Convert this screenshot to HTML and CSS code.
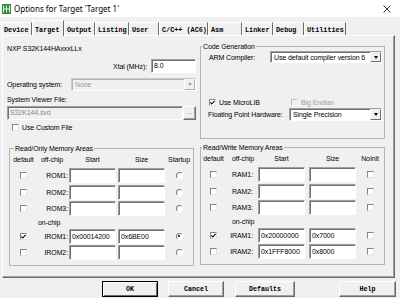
FILE: index.html
```html
<!DOCTYPE html>
<html lang="en">
<head>
  <meta charset="UTF-8">
  <title>Options for Target 'Target 1'</title>
  <link rel="stylesheet" href="styles.css">
</head>
<body>

  <div class="titlebar">
    <svg class="app-icon" width="9" height="10" viewBox="0 0 9 10">
      <rect width="9" height="10" fill="#2a8a3e"/>
      <path d="M1.5 1.5v7M4.5 1.5v7M1.5 5h6M7.5 1.5v7" stroke="#e6f2df" stroke-width="1" fill="none"/>
    </svg>
    <span class="title">Options for Target 'Target 1'</span>
    <svg class="close" width="8" height="8" viewBox="0 0 8 8">
      <path d="M0.5 0.5l7 7M7.5 0.5l-7 7" stroke="#222" stroke-width="0.9"/>
    </svg>
  </div>

  <div class="tabs">
    <span class="tab">Device</span>
    <span class="tab active">Target</span>
    <span class="tab">Output</span>
    <span class="tab">Listing</span>
    <span class="tab">User</span>
    <span class="tab">C/C++ (AC6)</span>
    <span class="tab">Asm</span>
    <span class="tab">Linker</span>
    <span class="tab">Debug</span>
    <span class="tab">Utilities</span>
  </div>

  <div class="panel">
    <div class="col">
      <div class="device">NXP S32K144HAxxxLLx</div>
      <div class="xtal-row">
        <span>Xtal (MHz):</span>
        <span class="edit xtal">8.0</span>
      </div>
      <div class="os-row">
        <span>Operating system:</span>
        <span class="combo disabled"><span class="val">None</span><span class="drop"></span></span>
      </div>
      <div class="svf-label">System Viewer File:</div>
      <div class="svf-row">
        <span class="edit disabled">S32K144.svd</span>
        <span class="dots">...</span>
      </div>
      <div class="check-row"><span class="cb"></span>Use Custom File</div>

      <fieldset class="group rom">
        <legend>Read/Only Memory Areas</legend>
        <div class="mem-grid">
          <span class="h">default</span><span class="h off">off-chip</span><span class="h">Start</span><span class="h">Size</span><span class="h">Startup</span>
          <span class="cb"></span><span class="lbl">ROM1:</span><span class="edit"></span><span class="edit"></span><span class="radio"></span>
          <span class="cb"></span><span class="lbl">ROM2:</span><span class="edit"></span><span class="edit"></span><span class="radio"></span>
          <span class="cb"></span><span class="lbl">ROM3:</span><span class="edit"></span><span class="edit"></span><span class="radio"></span>
          <span></span><span class="onchip">on-chip</span>
          <span class="cb checked"><svg width="5" height="5" viewBox="0 0 5 5"><path d="M0.4 2.4l1.4 1.6L4.6 0.8" stroke="#000" stroke-width="1.1" fill="none"/></svg></span><span class="lbl">IROM1:</span><span class="edit">0x00014200</span><span class="edit">0x6BE00</span><span class="radio on"></span>
          <span class="cb"></span><span class="lbl">IROM2:</span><span class="edit"></span><span class="edit"></span><span class="radio"></span>
        </div>
      </fieldset>
    </div>

    <div class="col">
      <fieldset class="group codegen">
        <legend>Code Generation</legend>
        <div class="cg-row arm">
          <span>ARM Compiler:</span>
          <span class="combo"><span class="val">Use default compiler version 6</span><span class="drop"></span></span>
        </div>
        <div class="cg-checks">
          <span class="check-item"><span class="cb checked"><svg width="5" height="5" viewBox="0 0 5 5"><path d="M0.4 2.4l1.4 1.6L4.6 0.8" stroke="#000" stroke-width="1.1" fill="none"/></svg></span>Use MicroLIB</span>
          <span class="check-item disabled"><span class="cb"></span>Big Endian</span>
        </div>
        <div class="cg-row fph">
          <span>Floating Point Hardware:</span>
          <span class="combo"><span class="val">Single Precision</span><span class="drop"></span></span>
        </div>
      </fieldset>

      <fieldset class="group ram">
        <legend>Read/Write Memory Areas</legend>
        <div class="mem-grid">
          <span class="h">default</span><span class="h off">off-chip</span><span class="h">Start</span><span class="h">Size</span><span class="h">NoInit</span>
          <span class="cb"></span><span class="lbl">RAM1:</span><span class="edit"></span><span class="edit"></span><span class="cb"></span>
          <span class="cb"></span><span class="lbl">RAM2:</span><span class="edit"></span><span class="edit"></span><span class="cb"></span>
          <span class="cb"></span><span class="lbl">RAM3:</span><span class="edit"></span><span class="edit"></span><span class="cb"></span>
          <span></span><span class="onchip">on-chip</span>
          <span class="cb checked"><svg width="5" height="5" viewBox="0 0 5 5"><path d="M0.4 2.4l1.4 1.6L4.6 0.8" stroke="#000" stroke-width="1.1" fill="none"/></svg></span><span class="lbl">IRAM1:</span><span class="edit">0x20000000</span><span class="edit">0x7000</span><span class="cb"></span>
          <span class="cb"></span><span class="lbl">IRAM2:</span><span class="edit">0x1FFF8000</span><span class="edit">0x8000</span><span class="cb"></span>
        </div>
      </fieldset>
    </div>
  </div>

  <div class="buttons">
    <span class="btn default">OK</span>
    <span class="btn">Cancel</span>
    <span class="btn wide">Defaults</span>
    <span class="btn help">Help</span>
  </div>

</body>
</html>
```

FILE: styles.css
```css
* { box-sizing: border-box; }

body {
  margin: 0;
  width: 400px;
  height: 298px;
  overflow: hidden;
  background: #f0f0f0;
  color: #000;
  font-family: "Liberation Sans", Arial, sans-serif;
  font-size: 7px;
  line-height: 9px;
  letter-spacing: -0.1px;
}

/* title bar */
.titlebar { height: 17px; background: #fff; display: flex; align-items: center; padding: 0 9px 0 2px; }
.app-icon { flex: none; }
.title { flex: 1; margin-left: 3px; font-family: "Noto Sans", sans-serif; font-size: 8px; letter-spacing: 0; }
.close { flex: none; }

/* tabs */
.tabs { display: flex; align-items: flex-start; height: 13px; margin-top: 5px; padding-left: 1px; font-family: "Liberation Mono", monospace; font-weight: bold; font-size: 6.8px; letter-spacing: 0; }
.tab { flex: none; height: 13px; padding: 2px 0 0 2px; line-height: 10px; white-space: nowrap; overflow: hidden; border-top: 1px solid #fff; border-left: 1px solid #fff; border-right: 1px solid #6d6d6d; }
.tab:nth-child(1) { width: 31px; }
.tab:nth-child(2) { width: 32px; }
.tab:nth-child(3) { width: 31px; }
.tab:nth-child(4) { width: 34px; }
.tab:nth-child(5) { width: 30px; }
.tab:nth-child(6) { width: 49px; }
.tab:nth-child(7) { width: 34px; }
.tab:nth-child(8) { width: 31px; }
.tab:nth-child(9) { width: 31px; }
.tab:nth-child(10) { width: 42px; }
.tab.active { position: relative; z-index: 1; height: 16px; margin-top: -2px; padding-top: 4px; background: #f0f0f0; }

/* page */
.panel { display: grid; grid-template-columns: 189px 185px; column-gap: 4px; align-items: start; width: 393px; height: 243px; margin-left: 2px; padding-left: 4px; border: 1px solid #fff; border-right-color: #6d6d6d; border-bottom-color: #6d6d6d; box-shadow: inset -1px -1px 0 #a0a0a0; }
.col { display: flex; flex-direction: column; }

.device { margin-top: 8px; }
.xtal-row { display: flex; justify-content: flex-end; align-items: center; gap: 4px; margin-top: 6px; }
.os-row { display: grid; grid-template-columns: 64px 1fr; align-items: center; margin-top: 5px; }
.svf-label { margin-top: 4px; }
.svf-row { display: flex; margin-top: 2px; }
.check-row { display: flex; align-items: center; gap: 3px; height: 9px; margin-top: 3px; padding-left: 5px; }

/* controls */
.edit { display: block; height: 15px; padding-left: 2px; line-height: 13px; white-space: nowrap; overflow: hidden; background: #fff; border: 1px solid; border-color: #a0a0a0 #fff #fff #a0a0a0; box-shadow: inset 1px 1px 0 #707070; }
.edit.xtal { width: 45px; height: 14px; line-height: 12px; }
.edit.disabled { flex: 1; height: 14px; line-height: 12px; color: #8a8a8a; background: #f0f0f0; }
.dots { width: 13px; height: 14px; line-height: 10px; text-align: center; color: #8a8a8a; border: 1px solid; border-color: #fff #6d6d6d #6d6d6d #fff; box-shadow: inset -1px -1px 0 #a0a0a0; }

.combo { display: flex; height: 13px; background: #fff; border: 1px solid; border-color: #a0a0a0 #fff #fff #a0a0a0; box-shadow: inset 1px 1px 0 #707070; }
.combo .val { flex: 1; padding-left: 3px; line-height: 11px; white-space: nowrap; overflow: hidden; }
.drop { flex: none; width: 11px; display: flex; align-items: center; justify-content: center; background: #f0f0f0; border: 1px solid; border-color: #f0f0f0 #6d6d6d #6d6d6d #fff; }
.drop::after { content: ""; border-left: 2.5px solid transparent; border-right: 2.5px solid transparent; border-top: 3px solid #000; }
.combo.disabled { background: #f0f0f0; color: #9a9a9a; border-color: #c8c8c8 #fff #fff #c8c8c8; box-shadow: inset 1px 1px 0 #b4b4b4; }
.combo.disabled .drop { border-color: #f0f0f0 #b0b0b0 #b0b0b0 #fff; }
.combo.disabled .drop::after { border-top-color: #a0a0a0; }

.cb { flex: none; width: 7px; height: 7px; display: flex; align-items: center; justify-content: center; background: #fff; border: 1px solid; border-color: #848484 #e6e6e6 #e6e6e6 #848484; }
.radio { width: 7px; height: 7px; display: flex; align-items: center; justify-content: center; border-radius: 50%; background: #fff; border: 1px solid; border-color: #7a7a7a #fff #fff #7a7a7a; }
.radio.on::after { content: ""; width: 2px; height: 2px; border-radius: 50%; background: #000; }

/* group boxes */
.group { margin: 0; padding: 0; min-width: 0; border: 1px solid #b4b4b4; }
.group legend { padding: 0 1px; margin-left: 1px; line-height: 9px; }

.rom { width: 185px; margin: 12px 0 0 2px; padding: 1px 0 5px; }
.rom legend { margin-left: 4px; }
.codegen { margin-top: 6px; padding: 0 2px 17px 0; }
.ram { margin-top: 4px; padding: 1px 0 5px; }

.cg-row { display: grid; align-items: center; margin-left: 8px; }
.cg-row.arm { grid-template-columns: 61px 1fr; height: 12px; }
.cg-row.arm .combo { height: 12px; }
.cg-row.fph { grid-template-columns: 81px 1fr; margin-top: 1px; margin-left: 7px; }
.cg-checks { display: flex; height: 9px; margin: 35px 0 0 8px; }
.check-item { display: flex; align-items: center; gap: 3px; width: 82px; }
.check-item.disabled { color: #a0a0a0; }
.check-item.disabled .cb { background: #f0f0f0; border-color: #c0c0c0 #f8f8f8 #f8f8f8 #c0c0c0; }

.mem-grid { display: grid; grid-template-rows: 13px 17px 16px 16px 12px 16px 16px; align-items: center; }
.rom .mem-grid { grid-template-columns: 27px 32px 49px 47px 1fr; }
.ram .mem-grid { grid-template-columns: 25px 32px 51px 47px 1fr; }
.mem-grid .h { align-self: start; padding-top: 1px; text-align: center; white-space: nowrap; }
.mem-grid .h:nth-child(3), .mem-grid .h:nth-child(4) { width: 47px; }
.mem-grid .h.off { text-align: left; padding-left: 4px; }
.ram .mem-grid .h.off { padding-left: 6px; }
.mem-grid .cb, .mem-grid .radio { justify-self: center; }
.mem-grid .edit { width: 47px; }
.lbl { text-align: right; padding-right: 1px; }
.ram .lbl { padding-right: 5px; }
.onchip { grid-column: 2 / -1; padding-left: 1px; }
.ram .onchip { padding-left: 6px; }

/* buttons */
.buttons { display: flex; gap: 10px; margin-top: 3px; padding-left: 102px; font-family: "Liberation Mono", monospace; font-weight: bold; font-size: 6.7px; letter-spacing: 0; }
.btn { width: 56px; height: 16px; display: flex; align-items: center; justify-content: center; border: 1px solid; border-color: #fff #696969 #696969 #fff; box-shadow: inset -1px -1px 0 #a0a0a0; }
.btn.default { border-color: #000; box-shadow: inset 1px 1px 0 #fff, inset -1px -1px 0 #696969; }
.btn.wide { width: 60px; margin-left: 1px; }
.btn.help { width: 57px; margin-left: 34px; }
```
